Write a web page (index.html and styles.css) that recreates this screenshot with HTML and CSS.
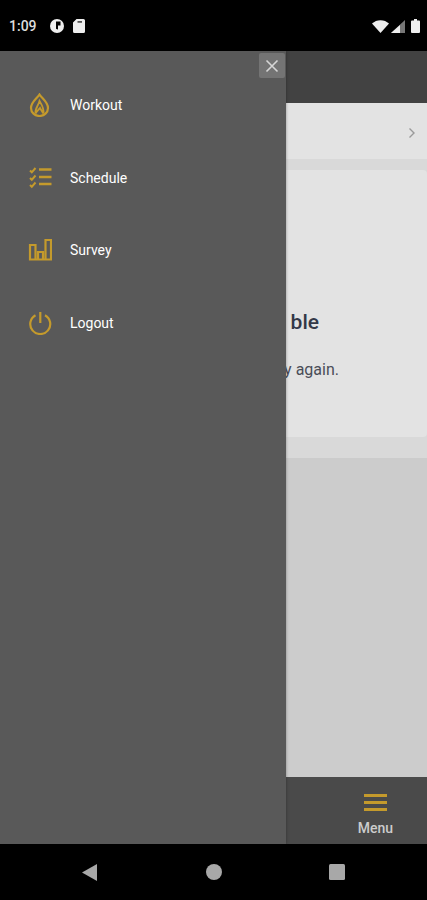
FILE: index.html
```html
<!DOCTYPE html>
<html lang="en">

<head>
    <meta charset="UTF-8">
    <meta name="viewport" content="width=device-width, initial-scale=1.0">
    <title>Menu</title>
    <link rel="stylesheet" href="styles.css">
</head>

<body>
    <div class="status-bar">
        <div class="status-left">
            <span class="clock">1:09</span>
            <svg width="14" height="14" viewBox="0 0 14 14">
                <circle cx="7" cy="7" r="7" fill="#eeeeee" />
                <path d="M6 2.500H10.500V6.500H8V10.500A4 4 0 0 1 6 9.800z" fill="#000000" />
            </svg>
            <svg width="12" height="14" viewBox="0 0 12 14">
                <path d="M3.500 0H10.500a1.500 1.500 0 0 1 1.500 1.500V12.500a1.500 1.500 0 0 1-1.500 1.500H1.500a1.500 1.500 0 0 1-1.500-1.500V3.500z" fill="#eeeeee" />
                <path d="M4.500 2h4.500v1.800H4.500z" fill="#555555" />
            </svg>
        </div>
        <div class="status-right">
            <svg width="17" height="13" viewBox="0 0 17 13">
                <path d="M0 3.500A12.500 12.500 0 0 1 17 3.500L8.500 13z" fill="#eeeeee" />
            </svg>
            <svg width="14" height="13" viewBox="0 0 14 13">
                <path d="M14 0V13H0z" fill="#777777" />
                <path d="M9 5V13H0z" fill="#eeeeee" />
            </svg>
            <svg class="battery" width="9" height="14" viewBox="0 0 9 14">
                <path d="M3 0H6V1.500H8a1 1 0 0 1 1 1V13a1 1 0 0 1-1 1H1a1 1 0 0 1-1-1V2.500a1 1 0 0 1 1-1H3z" fill="#eeeeee" />
            </svg>
        </div>
    </div>

    <div class="app">
        <div class="app-header"></div>

        <div class="content">
            <div class="top-row">
                <svg width="8" height="12" viewBox="0 0 8 12">
                    <path d="M1.500 1.500L6 6L1.500 10.500" fill="none" stroke="#9a9a9a" stroke-width="1.400" />
                </svg>
            </div>
            <div class="card-wrap">
                <div class="card">
                    <h2 class="card-title"><span class="title-start">Unavaila</span>ble</h2>
                    <p class="card-text">Please try again.</p>
                </div>
            </div>
        </div>

        <div class="tab-bar">
            <div class="tab">
                <div class="burger"><span></span><span></span><span></span></div>
                <span class="tab-label">Menu</span>
            </div>
        </div>

        <div class="drawer">
            <button class="close-btn" type="button" aria-label="Close">
                <svg width="14" height="14" viewBox="0 0 14 14">
                    <path d="M1.500 1.500L12.500 12.500M12.500 1.500L1.500 12.500" stroke="#d6d6d6" stroke-width="1.600" />
                </svg>
            </button>
            <ul class="drawer-list">
                <li class="drawer-item">
                    <svg class="drawer-icon" width="24" height="24" viewBox="0 0 24 24" fill="none" stroke="#c49a2c">
                        <path d="M11.500 1.500C14 5.500 20 9 20 15A8.500 8 0 0 1 3 15C3 9 9 5.500 11.500 1.500Z" stroke-width="2.200" />
                        <path d="M7.500 20.500C6.800 15.500 10.500 12.500 11.500 8C13.500 11.500 16.200 15 15.500 20.500M7.500 20.500C9 17.500 11 16.500 12 15C13 17 14 18 15.500 20.500" stroke-width="1.800" />
                    </svg>
                    <span>Workout</span>
                </li>
                <li class="drawer-item">
                    <svg class="drawer-icon" width="24" height="24" viewBox="0 0 24 24" fill="none" stroke="#c49a2c">
                        <path d="M2 4.500L3.800 6.300L7.500 2M2 12L3.800 13.800L7.500 9.500M2 19L3.800 20.800L7.500 16.500" stroke-width="2" />
                        <path d="M11 3.500H23.500M11 11H23.500M11 18H23.500" stroke-width="2.600" />
                    </svg>
                    <span>Schedule</span>
                </li>
                <li class="drawer-item">
                    <svg class="drawer-icon" width="24" height="24" viewBox="0 0 24 24" fill="none" stroke="#c49a2c" stroke-width="2.200">
                        <path d="M2 7H7.500V21.500H2zM10 14H15V21.500H10zM17.500 2H23V21.500H17.500zM7.500 21.500H17.500" />
                    </svg>
                    <span>Survey</span>
                </li>
                <li class="drawer-item">
                    <svg class="drawer-icon" width="24" height="24" viewBox="0 0 24 24" fill="none" stroke="#c49a2c" stroke-width="2.200">
                        <path d="M7.500 4.200A10 10 0 1 0 17 4.200" />
                        <path d="M12.300 1V12" />
                    </svg>
                    <span>Logout</span>
                </li>
            </ul>
        </div>
    </div>

    <div class="nav-bar">
        <svg width="17" height="17" viewBox="0 0 17 17">
            <path d="M15 0V17L0 8.500z" fill="#a8a8a8" />
        </svg>
        <svg width="16" height="16" viewBox="0 0 16 16">
            <circle cx="8" cy="8" r="8" fill="#a8a8a8" />
        </svg>
        <svg width="16" height="16" viewBox="0 0 16 16">
            <rect width="16" height="16" rx="1.500" fill="#a8a8a8" />
        </svg>
    </div>
</body>

</html>
```

FILE: styles.css
```css
* {
    box-sizing: border-box;
}

body {
    font-family: Roboto, Arial, sans-serif;
    margin: 0;
    padding: 0;
    width: 427px;
    height: 900px;
    display: flex;
    flex-direction: column;
    overflow: hidden;
    background-color: #000000;
}

svg {
    display: block;
    flex-shrink: 0;
}

.status-bar {
    height: 51px;
    padding: 1px 7px 0 9px;
    display: flex;
    justify-content: space-between;
    align-items: center;
    background-color: #000000;
}

.status-left {
    display: flex;
    align-items: center;
}

.status-left svg:nth-child(2) {
    margin-left: 13px;
}

.status-left svg:nth-child(3) {
    margin-left: 9px;
}

.clock {
    width: 28px;
    color: #dddddd;
    font-size: 14px;
    font-weight: 500;
}

.status-right {
    display: flex;
    align-items: center;
    gap: 2px;
}

.status-right .battery {
    margin-left: 4px;
}

.app {
    position: relative;
    flex: 1;
    display: flex;
    flex-direction: column;
}

.app-header {
    height: 52px;
    background-color: #424242;
}

.content {
    flex: 1;
    background-color: #cccccc;
}

.top-row {
    height: 56px;
    padding: 4px 11px 0 0;
    display: flex;
    justify-content: flex-end;
    align-items: center;
    background-color: #e3e3e3;
}

.card-wrap {
    padding: 11px 0 21px;
    background-color: #d9d9d9;
}

.card {
    height: 267px;
    padding-top: 140px;
    border-radius: 4px;
    text-align: right;
    background-color: #e3e3e3;
}

.card-title {
    margin: 0 108px 0 0;
    color: #333848;
    font-size: 21px;
    font-weight: 500;
    line-height: 24px;
}

.title-start {
    margin-right: 5px;
}

.card-text {
    margin: 27px 88px 0 0;
    color: #4a4d58;
    font-size: 16px;
    line-height: 18px;
}

.tab-bar {
    height: 67px;
    padding-right: 34px;
    display: flex;
    justify-content: flex-end;
    background-color: #4a4a4a;
}

.tab {
    padding-top: 17px;
    display: flex;
    flex-direction: column;
    align-items: center;
}

.burger {
    width: 23px;
    display: flex;
    flex-direction: column;
    gap: 4px;
}

.burger span {
    height: 3px;
    background-color: #c49a2c;
}

.tab-label {
    margin-top: 9px;
    color: #cccccc;
    font-size: 14px;
    font-weight: 500;
}

.drawer {
    position: absolute;
    top: 0;
    bottom: 0;
    left: 0;
    width: 286px;
    padding-top: 18px;
    background-color: #595959;
    box-shadow: 0 0 3px rgba(0, 0, 0, 0.35);
}

.close-btn {
    position: absolute;
    top: 2px;
    right: 1px;
    width: 26px;
    height: 25px;
    padding: 0;
    display: flex;
    justify-content: center;
    align-items: center;
    border: none;
    border-radius: 2px;
    background-color: #747474;
}

.drawer-list {
    margin: 0;
    padding: 0;
    list-style: none;
}

.drawer-item {
    height: 72.5px;
    padding-left: 28px;
    display: flex;
    align-items: center;
    gap: 18px;
    color: #ffffff;
    font-size: 14px;
}

.nav-bar {
    position: relative;
    height: 56px;
    padding: 0 82px;
    display: flex;
    justify-content: space-between;
    align-items: center;
    background-color: #000000;
}
```
